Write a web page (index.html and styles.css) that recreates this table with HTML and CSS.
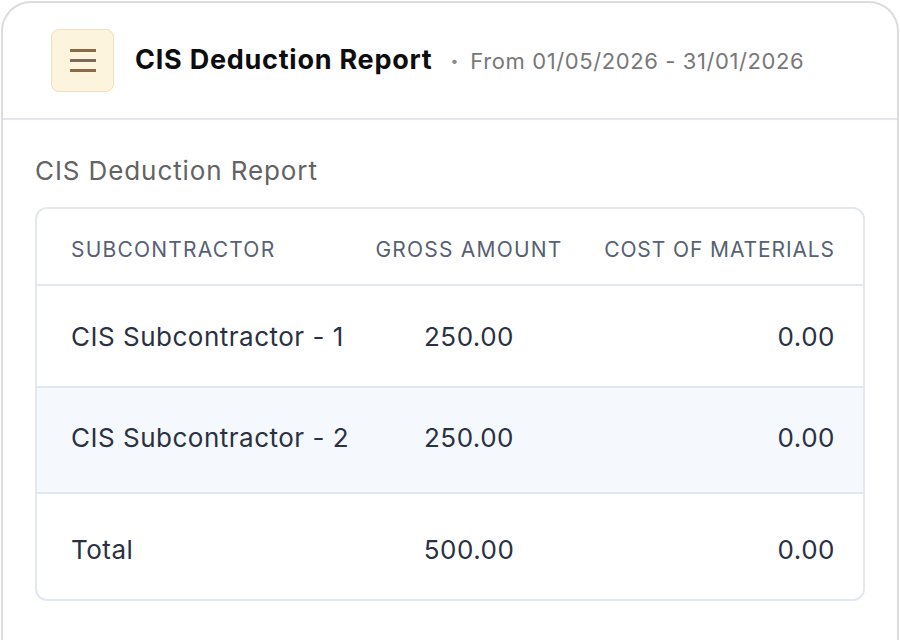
FILE: index.html
```html
<!DOCTYPE html>
<html lang="en">
<head>
<meta charset="utf-8">
<title>CIS Deduction Report</title>
<link rel="stylesheet" href="styles.css">
</head>
<body>
<div class="frame">
  <header class="topbar">
    <button class="menu-btn" aria-label="Menu">
      <svg width="28" height="26" viewBox="0 0 28 26">
        <rect x="1" y="1" width="26" height="3" fill="#8b6a48"/>
        <rect x="1" y="11" width="26" height="3" fill="#7a6b5e"/>
        <rect x="1" y="21" width="26" height="3" fill="#8b6a48"/>
      </svg>
    </button>
    <h1 class="title">CIS Deduction Report</h1>
    <span class="dot">•</span>
    <span class="range">From 01/05/2026 - 31/01/2026</span>
  </header>
  <main class="content">
    <h2 class="section-title">CIS Deduction Report</h2>
    <div class="table">
      <div class="row head">
        <div class="c1">SUBCONTRACTOR</div>
        <div class="c2">GROSS AMOUNT</div>
        <div class="c3">COST OF MATERIALS</div>
      </div>
      <div class="row r1">
        <div class="c1">CIS Subcontractor - 1</div>
        <div class="c2">250.00</div>
        <div class="c3">0.00</div>
      </div>
      <div class="row r2 alt">
        <div class="c1">CIS Subcontractor - 2</div>
        <div class="c2">250.00</div>
        <div class="c3">0.00</div>
      </div>
      <div class="row total">
        <div class="c1">Total</div>
        <div class="c2">500.00</div>
        <div class="c3">0.00</div>
      </div>
    </div>
  </main>
</div>
</body>
</html>
```
FILE: styles.css
```css
* { box-sizing: border-box; }
html, body { margin: 0; padding: 0; background: #ffffff; }
body { font-family: Inter, "Noto Sans", sans-serif; overflow: hidden; }

.frame {
  margin: 1px 1px 0 1px;
  height: 720px;
  border: 2px solid #dcdcdc;
  border-bottom: none;
  border-radius: 30px 30px 0 0;
  background: #fff;
}

.topbar {
  display: flex;
  align-items: center;
  height: 117px;
  padding-left: 48px;
  border-bottom: 2px solid #e4e7ef;
}

.menu-btn {
  width: 63px;
  height: 63px;
  margin-top: -1px;
  border: 1px solid #efdfbd;
  border-radius: 8px;
  background: #fdf4dd;
  display: flex;
  align-items: center;
  justify-content: center;
  padding: 0;
}
.menu-btn svg { display: block; margin-top: 1px; }

.title {
  margin: -2px 0 0 21px;
  font-size: 27px;
  font-weight: 700;
  color: #0d0d0f;
  letter-spacing: 0.75px;
  white-space: nowrap;
}

.dot {
  margin: 0 12px 0 18px;
  font-size: 14px;
  color: #8a8a8a;
}

.range {
  font-size: 22px;
  color: #787878;
  letter-spacing: 0.6px;
  white-space: nowrap;
}

.content {
  padding: 35px 32px 0 32px;
}

.section-title {
  margin: 0 0 20px 0;
  font-size: 26px;
  font-weight: 400;
  color: #636363;
  line-height: 32px;
  letter-spacing: 0.9px;
}

.table {
  border: 2px solid #e3e8f0;
  border-radius: 12px;
  overflow: hidden;
}

.row {
  display: grid;
  grid-template-columns: 298px 200px 1fr;
  align-items: center;
  padding: 0 28px 0 34px;
  font-size: 26px;
  color: #2a3144;
  letter-spacing: 0.5px;
  white-space: nowrap;
}
.row + .row { border-top: 2px solid #e3e8f0; }

.row.head {
  height: 75px;
  padding-top: 5px;
  font-size: 21px;
  letter-spacing: 1.2px;
  color: #576074;
}
.row.head .c3 { letter-spacing: 0.9px; }
.r1 { height: 102px; padding-top: 1px; }
.r2 { height: 106px; padding-bottom: 5px; }
.total { height: 107px; padding-top: 6px; }
.alt { background: #f5f8fd; }

.c2 { text-align: center; }
.c3 { text-align: right; }
```
